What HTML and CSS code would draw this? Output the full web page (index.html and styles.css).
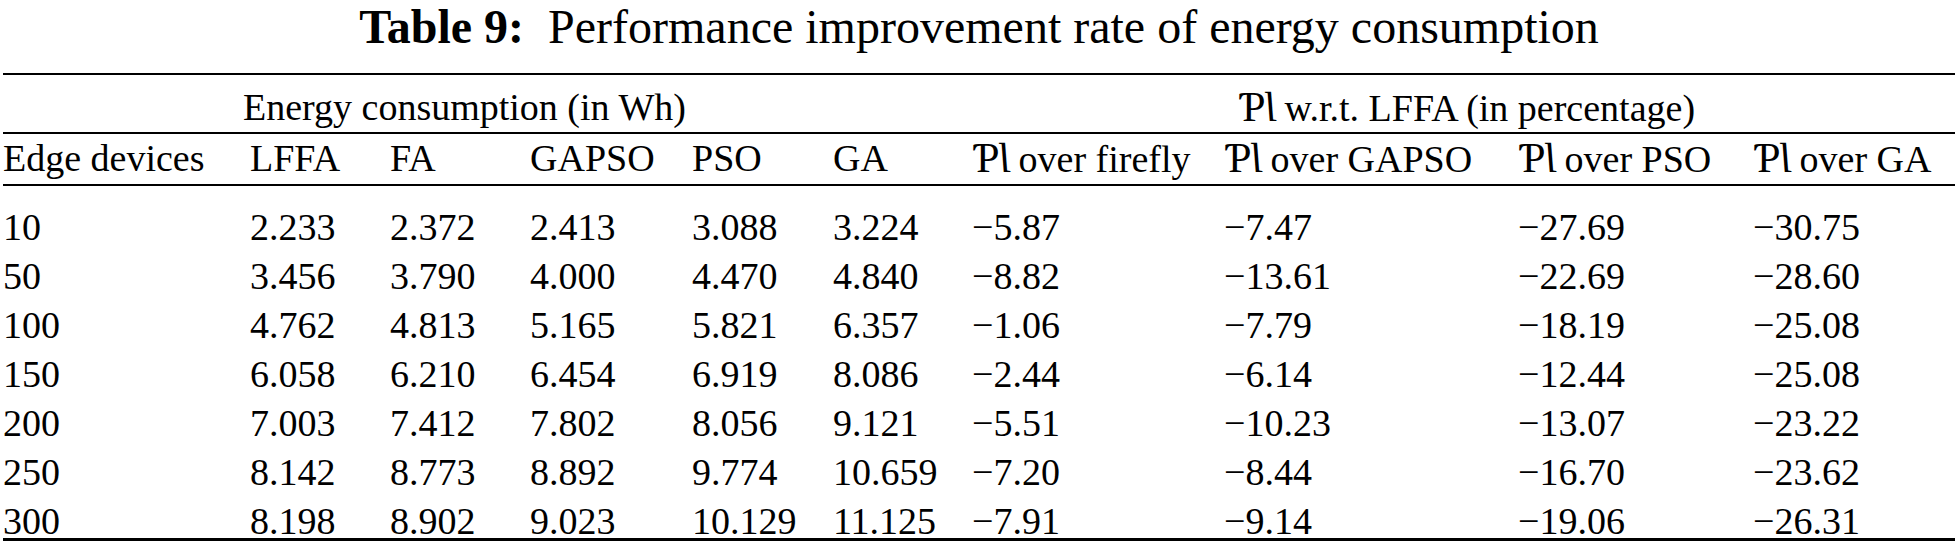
FILE: index.html
```html
<!DOCTYPE html>
<html>
<head>
<meta charset="utf-8">
<link rel="stylesheet" href="styles.css">
</head>
<body>
<div class="page">
  <h1 class="title"><b>Table 9:</b>&nbsp; Performance improvement rate of energy consumption</h1>
  <table class="tbl">
    <colgroup>
      <col class="c1"><col class="c2"><col class="c3"><col class="c4"><col class="c5">
      <col class="c6"><col class="c7"><col class="c8"><col class="c9"><col class="c10">
    </colgroup>
    <thead>
      <tr class="group">
        <th></th>
        <th colspan="5" class="g1">Energy consumption (in Wh)</th>
        <th colspan="4" class="g2"><span class="pl">Ƥ<span class="ltail">l</span></span> w.r.t. LFFA (in percentage)</th>
      </tr>
      <tr class="head">
        <th>Edge devices</th>
        <th>LFFA</th>
        <th>FA</th>
        <th>GAPSO</th>
        <th>PSO</th>
        <th>GA</th>
        <th><span class="pl">Ƥ<span class="ltail">l</span></span> over firefly</th>
        <th><span class="pl">Ƥ<span class="ltail">l</span></span> over GAPSO</th>
        <th><span class="pl">Ƥ<span class="ltail">l</span></span> over PSO</th>
        <th><span class="pl">Ƥ<span class="ltail">l</span></span> over GA</th>
      </tr>
    </thead>
    <tbody>
      <tr class="first"><td>10</td><td>2.233</td><td>2.372</td><td>2.413</td><td>3.088</td><td>3.224</td><td>−5.87</td><td>−7.47</td><td>−27.69</td><td>−30.75</td></tr>
      <tr><td>50</td><td>3.456</td><td>3.790</td><td>4.000</td><td>4.470</td><td>4.840</td><td>−8.82</td><td>−13.61</td><td>−22.69</td><td>−28.60</td></tr>
      <tr><td>100</td><td>4.762</td><td>4.813</td><td>5.165</td><td>5.821</td><td>6.357</td><td>−1.06</td><td>−7.79</td><td>−18.19</td><td>−25.08</td></tr>
      <tr><td>150</td><td>6.058</td><td>6.210</td><td>6.454</td><td>6.919</td><td>8.086</td><td>−2.44</td><td>−6.14</td><td>−12.44</td><td>−25.08</td></tr>
      <tr><td>200</td><td>7.003</td><td>7.412</td><td>7.802</td><td>8.056</td><td>9.121</td><td>−5.51</td><td>−10.23</td><td>−13.07</td><td>−23.22</td></tr>
      <tr><td>250</td><td>8.142</td><td>8.773</td><td>8.892</td><td>9.774</td><td>10.659</td><td>−7.20</td><td>−8.44</td><td>−16.70</td><td>−23.62</td></tr>
      <tr class="last"><td>300</td><td>8.198</td><td>8.902</td><td>9.023</td><td>10.129</td><td>11.125</td><td>−7.91</td><td>−9.14</td><td>−19.06</td><td>−26.31</td></tr>
    </tbody>
  </table>
</div>
</body>
</html>
```

FILE: styles.css
```css
html, body {
  margin: 0;
  padding: 0;
  background: #fff;
}

.page {
  width: 1958px;
  height: 546px;
  overflow: hidden;
  font-family: "Liberation Serif", "Times New Roman", Times, serif;
  color: #000;
}

.title {
  margin: 0;
  font-size: 48px;
  font-weight: normal;
  line-height: 54px;
  text-align: center;
  white-space: nowrap;
}

.title b {
  font-weight: bold;
}

.tbl {
  margin: 19px 0 0 3px;
  width: 1952px;
  table-layout: fixed;
  border-collapse: collapse;
  border-spacing: 0;
  font-size: 38px;
  border-top: 2px solid #000;
}

.c1 { width: 247px; }
.c2 { width: 140px; }
.c3 { width: 140px; }
.c4 { width: 162px; }
.c5 { width: 141px; }
.c6 { width: 139px; }
.c7 { width: 252px; }
.c8 { width: 294px; }
.c9 { width: 235px; }
.c10 { width: 202px; }

.tbl th,
.tbl td {
  padding: 0;
  text-align: left;
  font-weight: normal;
  white-space: nowrap;
  vertical-align: top;
}

.group th {
  padding: 11px 0 3px 0;
  line-height: 42px;
  border-bottom: 2px solid #000;
}

.group .g1 {
  text-indent: -7px;
}

.group .g2 {
  padding-left: 266px;
}

.head th {
  padding: 3px 0 4px 0;
  line-height: 42px;
  border-bottom: 2px solid #000;
}

.tbl td {
  padding-top: 15px;
  line-height: 34px;
}

.tbl tr.first td {
  padding-top: 24px;
}

.tbl tr.last td {
  border-bottom: 3px solid #000;
}

.pl {
  font-size: 42px;
  line-height: 1;
  letter-spacing: -1px;
}

.ltail {
  display: inline-block;
  font-style: italic;
  transform: skewX(14deg);
}
```
